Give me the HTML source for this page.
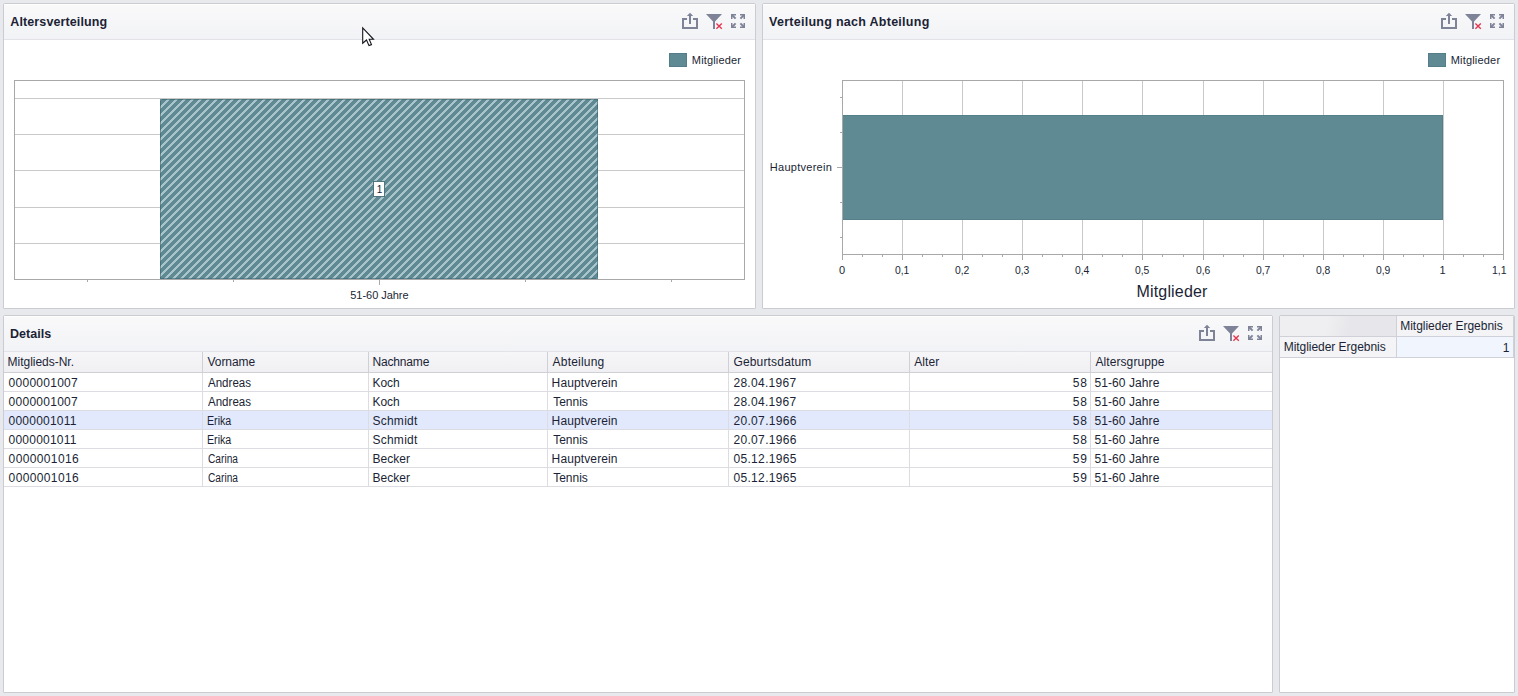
<!DOCTYPE html>
<html>
<head>
<meta charset="utf-8">
<title>Dashboard</title>
<style>
*{box-sizing:border-box;margin:0;padding:0}
html,body{width:1518px;height:696px;overflow:hidden}
body{background:#e8e9ec;font-family:"Liberation Sans",sans-serif;font-size:12px;color:#201f35;position:relative}
.panel{position:absolute;background:#fff;border:1px solid #cbccd1;border-radius:2px 2px 1px 1px;overflow:hidden}
.hdr{position:absolute;left:0;right:0;top:0;height:36px;background:linear-gradient(#f9f9fa,#f2f3f6);border-bottom:1px solid #e2e2e8;border-top:1px solid #fff}
.t{position:absolute;white-space:nowrap;z-index:6}
svg.ov{position:absolute;left:0;top:0;width:1518px;height:696px;z-index:5;pointer-events:none}
.ghead{position:absolute;left:4px;top:352px;width:1268px;height:21px;background:linear-gradient(#f6f6f8,#f0f0f3);border-bottom:1px solid #cfcfd6;z-index:2}
.vs{position:absolute;width:1px;z-index:4}
.hs{position:absolute;left:4px;width:1268px;height:19px;border-bottom:1px solid #dcdce2;z-index:3}
.hs.sel{background:#e2e9fc}
.pv{position:absolute;border-right:1px solid #d0d0d8;border-bottom:1px solid #d0d0d8}
</style>
</head>
<body>

<div class="panel" style="left:3px;top:3px;width:753px;height:306px"><div class="hdr"></div></div>
<div class="panel" style="left:762px;top:3px;width:753px;height:306px"><div class="hdr"></div></div>
<div class="panel" style="left:3px;top:315px;width:1270px;height:378px"><div class="hdr"></div></div>
<div class="panel" style="left:1279px;top:315px;width:236px;height:378px">
  <div class="pv" style="left:0;top:0;width:117px;height:21px;background:linear-gradient(100deg,#efeff1 40%,#e7e6ea 60%)"></div>
  <div class="pv" style="left:117px;top:0;width:117px;height:21px;background:#f4f4f6"></div>
  <div class="pv" style="left:0;top:21px;width:117px;height:21px;background:#f4f4f6"></div>
  <div class="pv" style="left:117px;top:21px;width:117px;height:21px;background:#f1f5fd"></div>
</div>

<div class="ghead"></div>
<div class="vs" style="left:202px;top:352px;height:20px;background:#cfcfd6"></div>
<div class="vs" style="left:202px;top:373px;height:114px;background:#dcdce2"></div>
<div class="vs" style="left:368px;top:352px;height:20px;background:#cfcfd6"></div>
<div class="vs" style="left:368px;top:373px;height:114px;background:#dcdce2"></div>
<div class="vs" style="left:547px;top:352px;height:20px;background:#cfcfd6"></div>
<div class="vs" style="left:547px;top:373px;height:114px;background:#dcdce2"></div>
<div class="vs" style="left:728px;top:352px;height:20px;background:#cfcfd6"></div>
<div class="vs" style="left:728px;top:373px;height:114px;background:#dcdce2"></div>
<div class="vs" style="left:909px;top:352px;height:20px;background:#cfcfd6"></div>
<div class="vs" style="left:909px;top:373px;height:114px;background:#dcdce2"></div>
<div class="vs" style="left:1090px;top:352px;height:20px;background:#cfcfd6"></div>
<div class="vs" style="left:1090px;top:373px;height:114px;background:#dcdce2"></div>
<div class="hs" style="top:373px"></div>
<div class="hs" style="top:392px"></div>
<div class="hs sel" style="top:411px"></div>
<div class="hs" style="top:430px"></div>
<div class="hs" style="top:449px"></div>
<div class="hs" style="top:468px"></div>

<svg class="ov" viewBox="0 0 1518 696">
<defs><pattern id="hatch" width="8" height="8" patternUnits="userSpaceOnUse" shape-rendering="crispEdges"><rect width="8" height="8" fill="#5f8a94"/><rect x="2" y="0" width="1" height="1" fill="#a9c4ca"/><rect x="3" y="0" width="1" height="1" fill="#a9c4ca"/><rect x="4" y="0" width="1" height="1" fill="#a9c4ca"/><rect x="1" y="1" width="1" height="1" fill="#a9c4ca"/><rect x="2" y="1" width="1" height="1" fill="#a9c4ca"/><rect x="3" y="1" width="1" height="1" fill="#a9c4ca"/><rect x="0" y="2" width="1" height="1" fill="#a9c4ca"/><rect x="1" y="2" width="1" height="1" fill="#a9c4ca"/><rect x="2" y="2" width="1" height="1" fill="#a9c4ca"/><rect x="7" y="3" width="1" height="1" fill="#a9c4ca"/><rect x="0" y="3" width="1" height="1" fill="#a9c4ca"/><rect x="1" y="3" width="1" height="1" fill="#a9c4ca"/><rect x="6" y="4" width="1" height="1" fill="#a9c4ca"/><rect x="7" y="4" width="1" height="1" fill="#a9c4ca"/><rect x="0" y="4" width="1" height="1" fill="#a9c4ca"/><rect x="5" y="5" width="1" height="1" fill="#a9c4ca"/><rect x="6" y="5" width="1" height="1" fill="#a9c4ca"/><rect x="7" y="5" width="1" height="1" fill="#a9c4ca"/><rect x="4" y="6" width="1" height="1" fill="#a9c4ca"/><rect x="5" y="6" width="1" height="1" fill="#a9c4ca"/><rect x="6" y="6" width="1" height="1" fill="#a9c4ca"/><rect x="3" y="7" width="1" height="1" fill="#a9c4ca"/><rect x="4" y="7" width="1" height="1" fill="#a9c4ca"/><rect x="5" y="7" width="1" height="1" fill="#a9c4ca"/></pattern></defs>
<rect x="14" y="98" width="731" height="1" fill="#c9c9c9"/>
<rect x="14" y="134" width="731" height="1" fill="#c9c9c9"/>
<rect x="14" y="170" width="731" height="1" fill="#c9c9c9"/>
<rect x="14" y="207" width="731" height="1" fill="#c9c9c9"/>
<rect x="14" y="243" width="731" height="1" fill="#c9c9c9"/>
<rect x="160" y="99" width="438" height="180" fill="url(#hatch)" shape-rendering="crispEdges"/>
<rect x="160.5" y="99.5" width="437" height="179" fill="none" stroke="#2f5f6a" stroke-opacity="0.55" stroke-width="1" shape-rendering="crispEdges"/>
<rect x="14" y="80" width="731" height="1" fill="#a8a8a8"/>
<rect x="14" y="279" width="731" height="1" fill="#a8a8a8"/>
<rect x="14" y="80" width="1" height="200" fill="#a8a8a8"/>
<rect x="744" y="80" width="1" height="200" fill="#a8a8a8"/>
<rect x="87" y="280" width="1" height="2" fill="#a8a8a8"/>
<rect x="233" y="280" width="1" height="2" fill="#a8a8a8"/>
<rect x="379" y="280" width="1" height="5" fill="#a8a8a8"/>
<rect x="525" y="280" width="1" height="2" fill="#a8a8a8"/>
<rect x="671" y="280" width="1" height="2" fill="#a8a8a8"/>
<rect x="373.5" y="181.5" width="11" height="15" fill="#fff" stroke="#4f7680"/>
<rect x="669.5" y="53.5" width="17" height="13" fill="#5f8a94" stroke="#537d87"/>
<rect x="902" y="80" width="1" height="175" fill="#c9c9c9"/>
<rect x="962" y="80" width="1" height="175" fill="#c9c9c9"/>
<rect x="1022" y="80" width="1" height="175" fill="#c9c9c9"/>
<rect x="1082" y="80" width="1" height="175" fill="#c9c9c9"/>
<rect x="1142" y="80" width="1" height="175" fill="#c9c9c9"/>
<rect x="1203" y="80" width="1" height="175" fill="#c9c9c9"/>
<rect x="1263" y="80" width="1" height="175" fill="#c9c9c9"/>
<rect x="1323" y="80" width="1" height="175" fill="#c9c9c9"/>
<rect x="1383" y="80" width="1" height="175" fill="#c9c9c9"/>
<rect x="1443" y="80" width="1" height="175" fill="#c9c9c9"/>
<rect x="842" y="115" width="601" height="105" fill="#5f8a94"/>
<rect x="842.5" y="115.5" width="600" height="104" fill="none" stroke="#55808a" stroke-width="1"/>
<rect x="842" y="80" width="662" height="1" fill="#a8a8a8"/>
<rect x="842" y="254" width="662" height="1" fill="#a8a8a8"/>
<rect x="842" y="80" width="1" height="175" fill="#a8a8a8"/>
<rect x="1503" y="80" width="1" height="175" fill="#a8a8a8"/>
<rect x="842" y="255" width="1" height="5" fill="#a8a8a8"/>
<rect x="862" y="255" width="1" height="2" fill="#a8a8a8"/>
<rect x="882" y="255" width="1" height="2" fill="#a8a8a8"/>
<rect x="902" y="255" width="1" height="5" fill="#a8a8a8"/>
<rect x="922" y="255" width="1" height="2" fill="#a8a8a8"/>
<rect x="942" y="255" width="1" height="2" fill="#a8a8a8"/>
<rect x="962" y="255" width="1" height="5" fill="#a8a8a8"/>
<rect x="982" y="255" width="1" height="2" fill="#a8a8a8"/>
<rect x="1002" y="255" width="1" height="2" fill="#a8a8a8"/>
<rect x="1022" y="255" width="1" height="5" fill="#a8a8a8"/>
<rect x="1042" y="255" width="1" height="2" fill="#a8a8a8"/>
<rect x="1062" y="255" width="1" height="2" fill="#a8a8a8"/>
<rect x="1082" y="255" width="1" height="5" fill="#a8a8a8"/>
<rect x="1102" y="255" width="1" height="2" fill="#a8a8a8"/>
<rect x="1122" y="255" width="1" height="2" fill="#a8a8a8"/>
<rect x="1142" y="255" width="1" height="5" fill="#a8a8a8"/>
<rect x="1162" y="255" width="1" height="2" fill="#a8a8a8"/>
<rect x="1183" y="255" width="1" height="2" fill="#a8a8a8"/>
<rect x="1203" y="255" width="1" height="5" fill="#a8a8a8"/>
<rect x="1223" y="255" width="1" height="2" fill="#a8a8a8"/>
<rect x="1243" y="255" width="1" height="2" fill="#a8a8a8"/>
<rect x="1263" y="255" width="1" height="5" fill="#a8a8a8"/>
<rect x="1283" y="255" width="1" height="2" fill="#a8a8a8"/>
<rect x="1303" y="255" width="1" height="2" fill="#a8a8a8"/>
<rect x="1323" y="255" width="1" height="5" fill="#a8a8a8"/>
<rect x="1343" y="255" width="1" height="2" fill="#a8a8a8"/>
<rect x="1363" y="255" width="1" height="2" fill="#a8a8a8"/>
<rect x="1383" y="255" width="1" height="5" fill="#a8a8a8"/>
<rect x="1403" y="255" width="1" height="2" fill="#a8a8a8"/>
<rect x="1423" y="255" width="1" height="2" fill="#a8a8a8"/>
<rect x="1443" y="255" width="1" height="5" fill="#a8a8a8"/>
<rect x="1463" y="255" width="1" height="2" fill="#a8a8a8"/>
<rect x="1483" y="255" width="1" height="2" fill="#a8a8a8"/>
<rect x="1503" y="255" width="1" height="5" fill="#a8a8a8"/>
<rect x="840" y="97" width="2" height="1" fill="#a8a8a8"/>
<rect x="840" y="132" width="2" height="1" fill="#a8a8a8"/>
<rect x="837" y="167" width="5" height="1" fill="#a8a8a8"/>
<rect x="840" y="202" width="2" height="1" fill="#a8a8a8"/>
<rect x="840" y="237" width="2" height="1" fill="#a8a8a8"/>
<rect x="1428.5" y="53.5" width="17" height="13" fill="#5f8a94" stroke="#537d87"/>
<path d="M362.7,27.9 L362.7,43.2 L366.5,40 L369,45.6 L371.5,44.6 L369.2,39.3 L373.5,39.3 Z" fill="#fff" stroke="#15151c" stroke-width="1.1" stroke-linejoin="miter"/>
<path d="M687,19 H683 V28 H697 V19 H693" fill="none" stroke="#7f8398" stroke-width="2" stroke-linejoin="miter"/>
<rect x="689" y="15" width="2" height="9" fill="#7f8398"/>
<path d="M690,12.8 L693.2,16.1 H686.8 Z" fill="#7f8398"/>
<path d="M706,14 H722 L715,21.5 V29 H713 V21.5 Z" fill="#7f8398"/>
<path d="M716.4,23.4 L721.8,28.8 M721.8,23.4 L716.4,28.8" stroke="#e6354f" stroke-width="1.35" fill="none"/>
<path d="M736,14.75 H731.75 V19" fill="none" stroke="#7f8398" stroke-width="1.5"/><path d="M732,15 L735.6,18.6" fill="none" stroke="#7f8398" stroke-width="2"/>
<path d="M740,14.75 H744.25 V19" fill="none" stroke="#7f8398" stroke-width="1.5"/><path d="M744,15 L740.4,18.6" fill="none" stroke="#7f8398" stroke-width="2"/>
<path d="M736,27.25 H731.75 V23" fill="none" stroke="#7f8398" stroke-width="1.5"/><path d="M732,27 L735.6,23.4" fill="none" stroke="#7f8398" stroke-width="2"/>
<path d="M740,27.25 H744.25 V23" fill="none" stroke="#7f8398" stroke-width="1.5"/><path d="M744,27 L740.4,23.4" fill="none" stroke="#7f8398" stroke-width="2"/>
<path d="M1446,19 H1442 V28 H1456 V19 H1452" fill="none" stroke="#7f8398" stroke-width="2" stroke-linejoin="miter"/>
<rect x="1448" y="15" width="2" height="9" fill="#7f8398"/>
<path d="M1449,12.8 L1452.2,16.1 H1445.8 Z" fill="#7f8398"/>
<path d="M1465,14 H1481 L1474,21.5 V29 H1472 V21.5 Z" fill="#7f8398"/>
<path d="M1475.4,23.4 L1480.8,28.8 M1480.8,23.4 L1475.4,28.8" stroke="#e6354f" stroke-width="1.35" fill="none"/>
<path d="M1495,14.75 H1490.75 V19" fill="none" stroke="#7f8398" stroke-width="1.5"/><path d="M1491,15 L1494.6,18.6" fill="none" stroke="#7f8398" stroke-width="2"/>
<path d="M1499,14.75 H1503.25 V19" fill="none" stroke="#7f8398" stroke-width="1.5"/><path d="M1503,15 L1499.4,18.6" fill="none" stroke="#7f8398" stroke-width="2"/>
<path d="M1495,27.25 H1490.75 V23" fill="none" stroke="#7f8398" stroke-width="1.5"/><path d="M1491,27 L1494.6,23.4" fill="none" stroke="#7f8398" stroke-width="2"/>
<path d="M1499,27.25 H1503.25 V23" fill="none" stroke="#7f8398" stroke-width="1.5"/><path d="M1503,27 L1499.4,23.4" fill="none" stroke="#7f8398" stroke-width="2"/>
<path d="M1204,331 H1200 V340 H1214 V331 H1210" fill="none" stroke="#7f8398" stroke-width="2" stroke-linejoin="miter"/>
<rect x="1206" y="327" width="2" height="9" fill="#7f8398"/>
<path d="M1207,324.8 L1210.2,328.1 H1203.8 Z" fill="#7f8398"/>
<path d="M1223,326 H1239 L1232,333.5 V341 H1230 V333.5 Z" fill="#7f8398"/>
<path d="M1233.4,335.4 L1238.8,340.8 M1238.8,335.4 L1233.4,340.8" stroke="#e6354f" stroke-width="1.35" fill="none"/>
<path d="M1253,326.75 H1248.75 V331" fill="none" stroke="#7f8398" stroke-width="1.5"/><path d="M1249,327 L1252.6,330.6" fill="none" stroke="#7f8398" stroke-width="2"/>
<path d="M1257,326.75 H1261.25 V331" fill="none" stroke="#7f8398" stroke-width="1.5"/><path d="M1261,327 L1257.4,330.6" fill="none" stroke="#7f8398" stroke-width="2"/>
<path d="M1253,339.25 H1248.75 V335" fill="none" stroke="#7f8398" stroke-width="1.5"/><path d="M1249,339 L1252.6,335.4" fill="none" stroke="#7f8398" stroke-width="2"/>
<path d="M1257,339.25 H1261.25 V335" fill="none" stroke="#7f8398" stroke-width="1.5"/><path d="M1261,339 L1257.4,335.4" fill="none" stroke="#7f8398" stroke-width="2"/>
</svg>

<div class="t" style="left:10.30px;top:14px;font-size:12.5px;line-height:16px;letter-spacing:0.113px;font-weight:bold">Altersverteilung</div>
<div class="t" style="left:769.00px;top:14px;font-size:12.5px;line-height:16px;letter-spacing:0.275px;font-weight:bold">Verteilung nach Abteilung</div>
<div class="t" style="left:10.00px;top:326px;font-size:12.5px;line-height:16px;letter-spacing:0.033px;font-weight:bold">Details</div>
<div class="t" style="left:7.60px;top:354px;font-size:12px;line-height:16px;letter-spacing:-0.025px">Mitglieds-Nr.</div>
<div class="t" style="left:207.50px;top:354px;font-size:12px;line-height:16px;letter-spacing:-0.067px">Vorname</div>
<div class="t" style="left:372.40px;top:354px;font-size:12px;line-height:16px;letter-spacing:-0.157px">Nachname</div>
<div class="t" style="left:552.60px;top:354px;font-size:12px;line-height:16px;letter-spacing:0.200px">Abteilung</div>
<div class="t" style="left:733.40px;top:354px;font-size:12px;line-height:16px;letter-spacing:0.173px">Geburtsdatum</div>
<div class="t" style="left:914.30px;top:354px;font-size:12px;line-height:16px;letter-spacing:0.050px">Alter</div>
<div class="t" style="left:1095.40px;top:354px;font-size:12px;line-height:16px;letter-spacing:0.091px">Altersgruppe</div>
<div class="t" style="left:8.60px;top:375px;font-size:12px;line-height:16px;letter-spacing:0.267px">0000001007</div>
<div class="t" style="left:207.50px;top:375px;font-size:12px;line-height:16px;transform:scaleX(0.9622);transform-origin:0 0">Andreas</div>
<div class="t" style="left:372.40px;top:375px;font-size:12px;line-height:16px">Koch</div>
<div class="t" style="left:551.60px;top:375px;font-size:12px;line-height:16px;letter-spacing:0.120px">Hauptverein</div>
<div class="t" style="left:733.40px;top:375px;font-size:12px;line-height:16px;letter-spacing:0.311px">28.04.1967</div>
<div class="t" style="left:1072.70px;top:375px;font-size:12px;line-height:16px;letter-spacing:0.800px">58</div>
<div class="t" style="left:1094.40px;top:375px;font-size:12px;line-height:16px;letter-spacing:0.090px">51-60 Jahre</div>
<div class="t" style="left:8.60px;top:394px;font-size:12px;line-height:16px;letter-spacing:0.267px">0000001007</div>
<div class="t" style="left:207.50px;top:394px;font-size:12px;line-height:16px;transform:scaleX(0.9622);transform-origin:0 0">Andreas</div>
<div class="t" style="left:372.40px;top:394px;font-size:12px;line-height:16px">Koch</div>
<div class="t" style="left:553.20px;top:394px;font-size:12px;line-height:16px;letter-spacing:-0.020px">Tennis</div>
<div class="t" style="left:733.40px;top:394px;font-size:12px;line-height:16px;letter-spacing:0.311px">28.04.1967</div>
<div class="t" style="left:1072.70px;top:394px;font-size:12px;line-height:16px;letter-spacing:0.800px">58</div>
<div class="t" style="left:1094.40px;top:394px;font-size:12px;line-height:16px;letter-spacing:0.090px">51-60 Jahre</div>
<div class="t" style="left:8.60px;top:413px;font-size:12px;line-height:16px;letter-spacing:0.211px">0000001011</div>
<div class="t" style="left:206.61px;top:413px;font-size:12px;line-height:16px;transform:scaleX(0.8889);transform-origin:0 0">Erika</div>
<div class="t" style="left:372.40px;top:413px;font-size:12px;line-height:16px;letter-spacing:0.267px">Schmidt</div>
<div class="t" style="left:551.60px;top:413px;font-size:12px;line-height:16px;letter-spacing:0.120px">Hauptverein</div>
<div class="t" style="left:733.40px;top:413px;font-size:12px;line-height:16px;letter-spacing:0.344px">20.07.1966</div>
<div class="t" style="left:1072.70px;top:413px;font-size:12px;line-height:16px;letter-spacing:0.800px">58</div>
<div class="t" style="left:1094.40px;top:413px;font-size:12px;line-height:16px;letter-spacing:0.090px">51-60 Jahre</div>
<div class="t" style="left:8.60px;top:432px;font-size:12px;line-height:16px;letter-spacing:0.211px">0000001011</div>
<div class="t" style="left:206.61px;top:432px;font-size:12px;line-height:16px;transform:scaleX(0.8889);transform-origin:0 0">Erika</div>
<div class="t" style="left:372.40px;top:432px;font-size:12px;line-height:16px;letter-spacing:0.267px">Schmidt</div>
<div class="t" style="left:553.20px;top:432px;font-size:12px;line-height:16px;letter-spacing:-0.020px">Tennis</div>
<div class="t" style="left:733.40px;top:432px;font-size:12px;line-height:16px;letter-spacing:0.344px">20.07.1966</div>
<div class="t" style="left:1072.70px;top:432px;font-size:12px;line-height:16px;letter-spacing:0.800px">58</div>
<div class="t" style="left:1094.40px;top:432px;font-size:12px;line-height:16px;letter-spacing:0.090px">51-60 Jahre</div>
<div class="t" style="left:8.60px;top:451px;font-size:12px;line-height:16px;letter-spacing:0.367px">0000001016</div>
<div class="t" style="left:207.50px;top:451px;font-size:12px;line-height:16px;transform:scaleX(0.8472);transform-origin:0 0">Carina</div>
<div class="t" style="left:372.40px;top:451px;font-size:12px;line-height:16px;letter-spacing:0.060px">Becker</div>
<div class="t" style="left:551.60px;top:451px;font-size:12px;line-height:16px;letter-spacing:0.120px">Hauptverein</div>
<div class="t" style="left:733.40px;top:451px;font-size:12px;line-height:16px;letter-spacing:0.344px">05.12.1965</div>
<div class="t" style="left:1072.70px;top:451px;font-size:12px;line-height:16px;letter-spacing:0.800px">59</div>
<div class="t" style="left:1094.40px;top:451px;font-size:12px;line-height:16px;letter-spacing:0.090px">51-60 Jahre</div>
<div class="t" style="left:8.60px;top:470px;font-size:12px;line-height:16px;letter-spacing:0.367px">0000001016</div>
<div class="t" style="left:207.50px;top:470px;font-size:12px;line-height:16px;transform:scaleX(0.8472);transform-origin:0 0">Carina</div>
<div class="t" style="left:372.40px;top:470px;font-size:12px;line-height:16px;letter-spacing:0.060px">Becker</div>
<div class="t" style="left:553.20px;top:470px;font-size:12px;line-height:16px;letter-spacing:-0.020px">Tennis</div>
<div class="t" style="left:733.40px;top:470px;font-size:12px;line-height:16px;letter-spacing:0.344px">05.12.1965</div>
<div class="t" style="left:1072.70px;top:470px;font-size:12px;line-height:16px;letter-spacing:0.800px">59</div>
<div class="t" style="left:1094.40px;top:470px;font-size:12px;line-height:16px;letter-spacing:0.090px">51-60 Jahre</div>
<div class="t" style="left:1400.20px;top:318px;font-size:12px;line-height:16px;letter-spacing:-0.011px">Mitglieder Ergebnis</div>
<div class="t" style="left:1283.70px;top:339px;font-size:12px;line-height:16px;letter-spacing:-0.039px">Mitglieder Ergebnis</div>
<div class="t" style="left:1502.75px;top:340px;font-size:12px;line-height:16px">1</div>
<div class="t" style="left:691.80px;top:52px;font-size:11px;line-height:16px;letter-spacing:0.167px">Mitglieder</div>
<div class="t" style="left:1450.70px;top:52px;font-size:11px;line-height:16px;letter-spacing:0.189px">Mitglieder</div>
<div class="t" style="left:350.30px;top:287px;font-size:11px;line-height:16px;letter-spacing:-0.040px">51-60 Jahre</div>
<div class="t" style="left:376.70px;top:181.5px;font-size:10px;line-height:16px">1</div>
<div class="t" style="left:769.80px;top:159px;font-size:11px;line-height:16px;letter-spacing:0.270px">Hauptverein</div>
<div class="t" style="left:839.05px;top:262px;font-size:11px;line-height:16px">0</div>
<div class="t" style="left:895.20px;top:262px;font-size:11px;line-height:16px;transform:scaleX(0.9400);transform-origin:0 0">0,1</div>
<div class="t" style="left:955.20px;top:262px;font-size:11px;line-height:16px;transform:scaleX(0.9400);transform-origin:0 0">0,2</div>
<div class="t" style="left:1015.20px;top:262px;font-size:11px;line-height:16px;transform:scaleX(0.9400);transform-origin:0 0">0,3</div>
<div class="t" style="left:1075.20px;top:262px;font-size:11px;line-height:16px;transform:scaleX(0.9400);transform-origin:0 0">0,4</div>
<div class="t" style="left:1135.20px;top:262px;font-size:11px;line-height:16px;transform:scaleX(0.9400);transform-origin:0 0">0,5</div>
<div class="t" style="left:1196.20px;top:262px;font-size:11px;line-height:16px;transform:scaleX(0.9400);transform-origin:0 0">0,6</div>
<div class="t" style="left:1256.20px;top:262px;font-size:11px;line-height:16px;transform:scaleX(0.9400);transform-origin:0 0">0,7</div>
<div class="t" style="left:1316.20px;top:262px;font-size:11px;line-height:16px;transform:scaleX(0.9400);transform-origin:0 0">0,8</div>
<div class="t" style="left:1376.20px;top:262px;font-size:11px;line-height:16px;transform:scaleX(0.9400);transform-origin:0 0">0,9</div>
<div class="t" style="left:1439.55px;top:262px;font-size:11px;line-height:16px">1</div>
<div class="t" style="left:1492.14px;top:262px;font-size:11px;line-height:16px;transform:scaleX(0.9571);transform-origin:0 0">1,1</div>
<div class="t" style="left:1136.50px;top:282px;font-size:16px;line-height:20px;letter-spacing:0.167px">Mitglieder</div>

</body>
</html>
